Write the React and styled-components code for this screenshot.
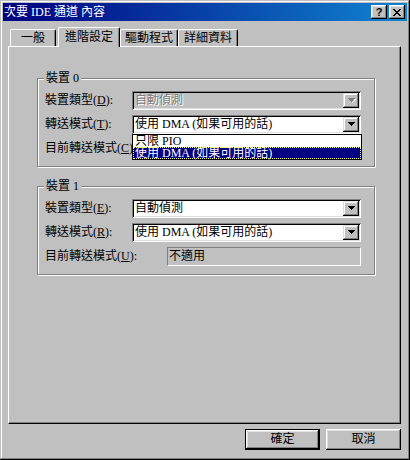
import React from "react";
import styled, { createGlobalStyle } from "styled-components";

const FONT = `"Liberation Serif", "Noto Sans CJK TC", serif`;

const Global = createGlobalStyle`
  html, body { margin: 0; padding: 0; background: #c0c0c0; }
  body { font-family: ${FONT}; font-size: 12px; color: #000; }
  * { box-sizing: border-box; }
`;

const Window = styled.div`
  width: 410px;
  height: 460px;
  background: #c0c0c0;
  padding: 3px;
  box-shadow: inset -1px -1px #000, inset 1px 1px #c0c0c0, inset -2px -2px #808080, inset 2px 2px #fff;
  display: flex;
  flex-direction: column;
`;

const TitleBar = styled.div`
  height: 18px;
  display: flex;
  align-items: center;
  padding: 0 2px 0 1px;
  background: linear-gradient(to right, #000080, #1084d0);
  color: #fff;
`;

const TitleText = styled.div`
  flex: 1;
  line-height: 14px;
  white-space: pre;
`;

const CapButton = styled.div`
  width: 16px;
  height: 14px;
  margin-left: ${(p) => p.$gap || 0}px;
  background: #c0c0c0;
  box-shadow: inset -1px -1px #000, inset 1px 1px #fff, inset -2px -2px #808080, inset 2px 2px #dfdfdf;
  display: flex;
  align-items: center;
  justify-content: center;
  color: #000;
  font-family: "Liberation Sans", sans-serif;
  font-weight: bold;
  font-size: 11px;
  line-height: 11px;
`;

const Client = styled.div`
  flex: 1;
  display: flex;
  flex-direction: column;
  padding: 6px 6px 0 5px;
`;

const TabRow = styled.div`
  height: 19px;
  display: flex;
  align-items: flex-end;
  padding-left: 2px;
  position: relative;
  z-index: 1;
`;

const Tab = styled.div`
  width: ${(p) => p.$w}px;
  height: ${(p) => (p.$active ? 20 : 17)}px;
  margin-right: ${(p) => p.$mr || 0}px;
  margin-bottom: ${(p) => (p.$active ? -1 : 0)}px;
  background: #c0c0c0;
  border-top: 1px solid #fff;
  border-left: 1px solid #fff;
  border-right: 1px solid #000;
  border-radius: 2px 2px 0 0;
  box-shadow: inset -1px 0 #808080;
  display: flex;
  align-items: ${(p) => (p.$active ? "flex-start" : "center")};
  padding-top: ${(p) => (p.$active ? 3 : 0)}px;
  justify-content: center;
  line-height: 13px;
`;

const Panel = styled.div`
  width: 393px;
  height: 378px;
  border-top: 1px solid #fff;
  border-left: 1px solid #fff;
  border-right: 1px solid #000;
  border-bottom: 1px solid #000;
  box-shadow: inset -1px -1px #808080;
  padding: 31px 0 0 28px;
  display: flex;
  flex-direction: column;
  gap: 19px;
`;

const Group = styled.div`
  position: relative;
  width: 338px;
  height: 89px;
  border: 1px solid #808080;
  box-shadow: inset 1px 1px #fff, 1px 1px #fff;
  padding: 12px 13px 0 7px;
  display: grid;
  grid-template-columns: 87px 229px;
  grid-auto-rows: 19px;
  row-gap: 5px;
  align-items: center;
`;

const Legend = styled.div`
  position: absolute;
  top: -7px;
  left: 6px;
  padding: 0 2px;
  background: #c0c0c0;
  line-height: 13px;
  white-space: pre;
`;

const Label = styled.div`
  line-height: 13px;
  white-space: nowrap;
  u { text-decoration: underline; }
`;

const ComboWrap = styled.div`
  position: relative;
  height: 19px;
`;

const Combo = styled.div`
  height: 19px;
  background: ${(p) => (p.$disabled ? "#c0c0c0" : "#fff")};
  box-shadow: inset 1px 1px #808080, inset -1px -1px #fff, inset 2px 2px #000, inset -2px -2px #dfdfdf;
  display: flex;
  align-items: center;
  padding: 2px 2px 2px 3px;
`;

const ComboText = styled.div`
  flex: 1;
  line-height: 13px;
  white-space: pre;
  color: ${(p) => (p.$disabled ? "#808080" : "#000")};
  text-shadow: ${(p) => (p.$disabled ? "1px 1px #fff" : "none")};
`;

const ArrowBtn = styled.div`
  width: 16px;
  height: 15px;
  background: #c0c0c0;
  box-shadow: inset -1px -1px #000, inset 1px 1px #dfdfdf, inset -2px -2px #808080, inset 2px 2px #fff;
  display: flex;
  align-items: center;
  justify-content: center;
`;

const DropList = styled.div`
  position: absolute;
  top: 100%;
  left: 0;
  width: 230px;
  z-index: 5;
  background: #fff;
  border: 1px solid #000;
`;

const DropItem = styled.div`
  height: 12px;
  line-height: 12px;
  padding-left: 2px;
  white-space: pre;
  background: ${(p) => (p.$sel ? "#000080" : "#fff")};
  color: ${(p) => (p.$sel ? "#fff" : "#000")};
  outline: ${(p) => (p.$sel ? "1px dotted #ffff80" : "none")};
  outline-offset: -1px;
`;

const Static = styled.div`
  height: 19px;
  margin-left: 35px;
  border-top: 1px solid #808080;
  border-left: 1px solid #808080;
  border-bottom: 1px solid #fff;
  border-right: 1px solid #fff;
  display: flex;
  align-items: center;
  padding-left: 1px;
  line-height: 13px;
`;

const ButtonRow = styled.div`
  display: flex;
  justify-content: flex-end;
  gap: 6px;
  margin-top: 5px;
`;

const Button = styled.div`
  width: 75px;
  height: 21px;
  background: #c0c0c0;
  box-shadow: ${(p) =>
    p.$default
      ? "inset -1px -1px #000, inset 1px 1px #000, inset -2px -2px #000, inset 2px 2px #fff, inset -3px -3px #808080, inset 3px 3px #dfdfdf"
      : "inset -1px -1px #000, inset 1px 1px #fff, inset -2px -2px #808080, inset 2px 2px #dfdfdf"};
  display: flex;
  align-items: center;
  justify-content: center;
  line-height: 13px;
`;

const Arrow = ({ disabled }) => (
  <svg width="7" height="5" viewBox="0 0 7 5" style={{ overflow: "visible" }}>
    {disabled && <path d="M1 1h7v1h-1v1h-1v1h-1v1h-1v-1h1v-1h1v-1h1z" fill="#fff" />}
    <path d="M0 0h7v1h-1v1h-1v1h-1v1h-1v-1h-1v-1h-1v-1h-1z" fill={disabled ? "#808080" : "#000"} />
  </svg>
);

const Close = () => (
  <svg width="8" height="7" viewBox="0 0 8 7">
    <path d="M0 0h2v1h1v1h2v-1h1v-1h2v1h-1v1h-1v1h-1v1h1v1h1v1h1v1h-2v-1h-1v-1h-2v1h-1v1h-2v-1h1v-1h1v-1h1v-1h-1v-1h-1v-1h-1z" fill="#000" />
  </svg>
);

function ComboBox({ text, disabled, children }) {
  return (
    <ComboWrap>
      <Combo $disabled={disabled}>
        <ComboText $disabled={disabled}>{text}</ComboText>
        <ArrowBtn>
          <Arrow disabled={disabled} />
        </ArrowBtn>
      </Combo>
      {children}
    </ComboWrap>
  );
}

export default function App() {
  return (
    <>
      <Global />
      <Window>
        <TitleBar>
          <TitleText>次要 IDE 通道 內容</TitleText>
          <CapButton>?</CapButton>
          <CapButton $gap={2}>
            <Close />
          </CapButton>
        </TitleBar>
        <Client>
          <TabRow>
            <Tab $w={46} $mr={2}>一般</Tab>
            <Tab $w={62} $active>進階設定</Tab>
            <Tab $w={58}>驅動程式</Tab>
            <Tab $w={60}>詳細資料</Tab>
          </TabRow>
          <Panel>
            <Group>
              <Legend>裝置 0</Legend>
              <Label>
                裝置類型(<u>D</u>):
              </Label>
              <ComboBox text="自動偵測" disabled />
              <Label>
                轉送模式(<u>T</u>):
              </Label>
              <ComboBox text="使用 DMA (如果可用的話)">
                <DropList>
                  <DropItem>只限 PIO</DropItem>
                  <DropItem $sel>使用 DMA (如果可用的話)</DropItem>
                </DropList>
              </ComboBox>
              <Label>
                目前轉送模式(<u>C</u>):
              </Label>
              <Static />
            </Group>
            <Group>
              <Legend>裝置 1</Legend>
              <Label>
                裝置類型(<u>E</u>):
              </Label>
              <ComboBox text="自動偵測" />
              <Label>
                轉送模式(<u>R</u>):
              </Label>
              <ComboBox text="使用 DMA (如果可用的話)" />
              <Label>
                目前轉送模式(<u>U</u>):
              </Label>
              <Static>不適用</Static>
            </Group>
          </Panel>
          <ButtonRow>
            <Button $default>確定</Button>
            <Button>取消</Button>
          </ButtonRow>
        </Client>
      </Window>
    </>
  );
}
